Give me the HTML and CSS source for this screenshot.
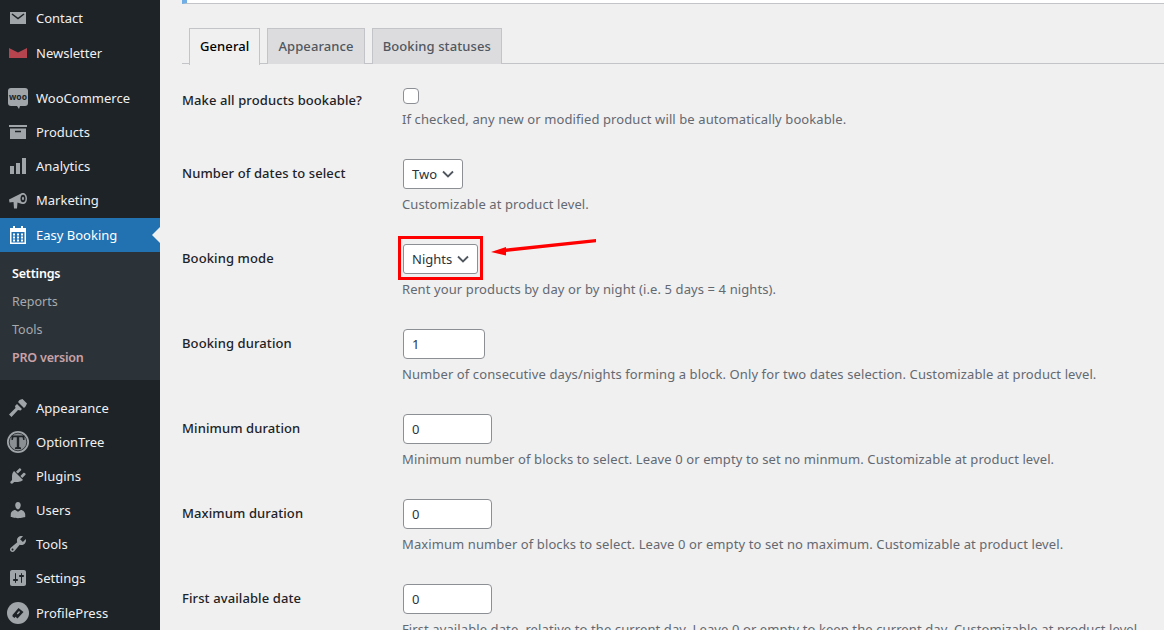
FILE: index.html
```html
<!DOCTYPE html>
<html>
<head>
<meta name="viewport" content="width=device-width, initial-scale=1">
<title>Easy Booking settings</title>
<link rel="stylesheet" href="styles.css">
</head>
<body>

<div class="page">
    <div id="sidebar">
        <ul class="menu">
            <li><svg class="ico" viewBox="0 0 20 20"><path d="M2 4h16v12H2z"/><path class="cut" d="M4 6l6 4.500L16 6"/></svg>Contact</li>
            <li class="news"><svg class="ico red" viewBox="0 0 20 20"><path d="M1 5l9 4.500L19 5v10H1z"/></svg>Newsletter</li>
            <li><svg class="ico wide" viewBox="0 0 22 22"><rect x="1" y="1" width="20" height="18" rx="3"/><path d="M10 19l2 3 1-3z"/><text class="woo" x="11" y="12.800" text-anchor="middle">woo</text></svg>WooCommerce</li>
            <li><svg class="ico" viewBox="0 0 20 20"><path d="M1 3h18v2H1zM2 6.500h16V17H2z"/><path class="cut" d="M7 9.500h6"/></svg>Products</li>
            <li><svg class="ico" viewBox="0 0 20 20"><path d="M18 18V2h-4v16h4zm-6 0V7H8v11h4zm-6 0v-8H2v8h4z"/></svg>Analytics</li>
            <li><svg class="ico" viewBox="0 0 20 20"><path d="M1 9.500L14 3l2 0c2 1 3 3 3 5.500s-1 5-3 5.500h-2l-4.500-1.500L9 18.500H6L5.500 12 1.500 12.500z"/><ellipse class="hole" cx="15" cy="8.500" rx="2.500" ry="3.800"/><ellipse cx="15" cy="8.500" rx="1" ry="1.800"/></svg>Marketing</li>
            <li class="current">
                <svg class="ico" viewBox="0 0 20 20"><path d="M5 1h2v2h6V1h2v2h3v16H2V3h3zM3.500 7v10.500h13V7z"/><path d="M5 8.500h2v2H5zM9 8.500h2v2H9zM13 8.500h2v2h-2zM5 11.500h2v2H5zM9 11.500h2v2H9zM13 11.500h2v2h-2zM5 14.500h2v2H5zM9 14.500h2v2H9zM13 14.500h2v2h-2z"/></svg>
                Easy Booking
            </li>
        </ul>
        <ul class="submenu">
            <li class="on">Settings</li>
            <li>Reports</li>
            <li>Tools</li>
            <li class="pro">PRO version</li>
        </ul>
        <ul class="menu lower">
            <li><svg class="ico" viewBox="0 0 20 20"><path d="M11.500 2l3-1 4.500 4.500-1.500 3-1.500 1.500-6-6zM9 6l5 5-1.500 1.500-2.500-.500-6.500 7-2.500-2.500 6.500-6.500L7 8z"/></svg>Appearance</li>
            <li><svg class="ico wide" viewBox="0 0 22 22"><circle cx="11" cy="11" r="11"/><circle class="ring" cx="11" cy="11" r="8.800"/><path class="hole" d="M4.500 4.500h13v4.500h-1.300l-.7-2.700h-3.300V16l1.800.6V18H8v-1.400l1.800-.6V6.300H6.500L5.800 9H4.500z"/></svg>OptionTree</li>
            <li><svg class="ico" viewBox="0 0 20 20"><path d="M13.110 4.360L9.870 7.600 8 5.730l3.240-3.240c.35-.34 1.050-.2 1.560.32.52.51.66 1.210.31 1.550zm-8 1.770l.91-1.120 9.010 9.010-1.190.84c-.71.71-2.630 1.160-3.820 1.160H6.140L4.900 17.260c-.59.59-1.540.59-2.120 0-.59-.58-.59-1.530 0-2.120l1.240-1.240v-3.880c0-1.130.4-3.190 1.090-3.890zm7.260 3.970l3.240-3.240c.34-.35 1.040-.21 1.550.31.52.51.66 1.210.31 1.550l-3.240 3.250z"/></svg>Plugins</li>
            <li><svg class="ico" viewBox="0 0 20 20"><path d="M10 9.250c-2.270 0-2.730-3.440-2.730-3.440C7 4.020 7.820 2 9.970 2c2.160 0 2.980 2.020 2.710 3.810 0 0-.41 3.440-2.680 3.440zm0 2.570L12.720 10c2.390 0 4.520 2.330 4.520 4.530v2.490s-3.650 1.130-7.240 1.130c-3.650 0-7.240-1.130-7.240-1.130v-2.490c0-2.250 1.940-4.480 4.470-4.480z"/></svg>Users</li>
            <li><svg class="ico" viewBox="0 0 20 20"><path d="M16.680 9.770c-1.340 1.340-3.300 1.670-4.950.99l-5.410 6.520c-.99.99-2.590.99-3.580 0s-.99-2.590 0-3.570l6.520-5.420c-.68-1.650-.35-3.610.99-4.950 1.280-1.280 3.120-1.620 4.720-1.060l-2.890 2.890 2.820 2.820 2.860-2.870c.53 1.580.18 3.390-1.080 4.650zM3.810 16.210c.4.39 1.040.39 1.430 0 .4-.4.4-1.040 0-1.430-.39-.4-1.030-.4-1.430 0-.39.39-.39 1.030 0 1.430z"/></svg>Tools</li>
            <li><svg class="ico" viewBox="0 0 20 20"><path d="M18 16V4c0-1.100-.9-2-2-2H4c-1.100 0-2 .9-2 2v12c0 1.100.9 2 2 2h12c1.100 0 2-.9 2-2zM8 11h1c.55 0 1 .45 1 1s-.45 1-1 1H8v1.500c0 .28-.22.5-.5.5s-.5-.22-.5-.5V13H6c-.55 0-1-.45-1-1s.45-1 1-1h1V5.500c0-.28.22-.5.5-.5s.5.22.5.5V11zm5-2h-1c-.55 0-1-.45-1-1s.45-1 1-1h1V5.500c0-.28.22-.5.5-.5s.5.22.5.5V7h1c.55 0 1 .45 1 1s-.45 1-1 1h-1v5.500c0 .28-.22.5-.5.5s-.5-.22-.5-.5V9z"/></svg>Settings</li>
            <li class="last"><svg class="ico wide" viewBox="0 0 22 22"><circle cx="11" cy="11" r="11"/><path class="hole" fill-rule="evenodd" d="M5.500 13l6-7 5 4-6 6.500-2-1.700-1 1.200-2-1.500zM12 9l-2.200 2.500 1 .9 2.300-2.500z"/></svg>ProfilePress</li>
        </ul>
    </div>

    <div id="content">
        <div class="notice"></div>

        <div class="tabs">
            <a class="tab active">General</a>
            <a class="tab">Appearance</a>
            <a class="tab">Booking statuses</a>
        </div>

        <div class="row first">
            <label>Make all products bookable?</label>
            <div>
                <input type="checkbox" class="check">
                <p class="desc">If checked, any new or modified product will be automatically bookable.</p>
            </div>
        </div>

        <div class="row">
            <label>Number of dates to select</label>
            <div>
                <div class="select s-two">Two<svg class="chev" viewBox="0 0 12 8"><path d="M1 1.500l5 5 5-5"/></svg></div>
                <p class="desc">Customizable at product level.</p>
            </div>
        </div>

        <div class="row">
            <label>Booking mode</label>
            <div class="marked">
                <div class="select s-nights">Nights<svg class="chev" viewBox="0 0 12 8"><path d="M1 1.500l5 5 5-5"/></svg></div>
                <p class="desc">Rent your products by day or by night (i.e. 5 days = 4 nights).</p>
                <div class="redbox"></div>
                <svg class="arrow" viewBox="0 0 106 17"><path d="M105 0L15 9.500 15 8 0 13l15 3.500V13l90-9.800z"/></svg>
            </div>
        </div>

        <div class="row">
            <label>Booking duration</label>
            <div>
                <input type="text" class="num short" value="1">
                <p class="desc">Number of consecutive days/nights forming a block. Only for two dates selection. Customizable at product level.</p>
            </div>
        </div>

        <div class="row">
            <label>Minimum duration</label>
            <div>
                <input type="text" class="num" value="0">
                <p class="desc">Minimum number of blocks to select. Leave 0 or empty to set no minmum. Customizable at product level.</p>
            </div>
        </div>

        <div class="row">
            <label>Maximum duration</label>
            <div>
                <input type="text" class="num" value="0">
                <p class="desc">Maximum number of blocks to select. Leave 0 or empty to set no maximum. Customizable at product level.</p>
            </div>
        </div>

        <div class="row">
            <label>First available date</label>
            <div>
                <input type="text" class="num" value="0">
                <p class="desc">First available date, relative to the current day. Leave 0 or empty to keep the current day. Customizable at product level.</p>
            </div>
        </div>
    </div>
</div>

</body>
</html>
```

FILE: styles.css
```css
html, body {
  margin: 0;
  height: 630px;
  overflow: hidden;
}

body {
  background: #f0f0f1;
  color: #2c3338;
  font-family: "Noto Sans", "Open Sans", sans-serif;
  font-size: 13px;
}

.page {
  display: flex;
  height: 630px;
  overflow: hidden;
}

/* Admin menu */
#sidebar {
  width: 160px;
  flex: none;
  background: #1d2327;
  color: #f0f0f1;
  padding-top: 1px;
}

ul {
  list-style: none;
  margin: 0;
  padding: 0;
}

.menu li {
  display: flex;
  align-items: center;
  height: 34px;
  padding-left: 8px;
}

.menu .news {
  margin-top: 1px;
  margin-bottom: 11px;
}

.menu .last {
  margin-top: 1px;
}

.menu .current {
  position: relative;
  background: #2271b1;
  color: #fff;
  margin-top: 1px;
}

.menu .current:after {
  content: "";
  position: absolute;
  right: 0;
  top: 9px;
  border: 8px solid transparent;
  border-right-color: #f0f0f1;
  border-left-width: 0;
}

.ico {
  width: 20px;
  height: 20px;
  flex: none;
  margin-right: 8px;
  fill: #a0a5aa;
}

.ico.wide {
  width: 22px;
  height: 22px;
  margin-left: -1px;
  margin-right: 7px;
}

.current .ico {
  fill: #fff;
}

.ico.red {
  fill: #b5444f;
}

.cut {
  fill: none;
  stroke: #1d2327;
  stroke-width: 1.5;
}

.ring {
  fill: #8a8f94;
  stroke: #1d2327;
  stroke-width: 0.8;
}

.hole {
  fill: #1d2327;
}

.woo {
  font-size: 8.500px;
  font-weight: 700;
  fill: #1d2327;
}

.submenu {
  background: #2c3338;
  color: #a7aaad;
  padding: 8px 0;
  height: 128px;
  box-sizing: border-box;
}

.submenu li {
  height: 28px;
  line-height: 28px;
  padding-left: 12px;
  font-size: 12.500px;
}

.submenu .on {
  color: #fff;
  font-weight: 600;
  letter-spacing: -0.2px;
}

.submenu .pro {
  color: #c9a2a8;
  font-weight: 600;
  letter-spacing: -0.2px;
}

.lower {
  padding-top: 11px;
}

/* Settings area */
#content {
  flex: 1;
  min-width: 0;
  padding-left: 22px;
}

.notice {
  height: 3px;
  background: #fff;
  border-left: 5px solid #72aee6;
  border-bottom: 1px solid #c3c4c7;
}

.tabs {
  display: flex;
  gap: 7px;
  height: 60px;
  padding: 24px 0 0 7px;
  box-sizing: border-box;
  border-bottom: 1px solid #c3c4c7;
  margin-bottom: 10px;
}

.tab {
  height: 35px;
  line-height: 35px;
  padding: 0 10px;
  background: #dcdcde;
  border: 1px solid #c3c4c7;
  border-bottom: 0;
  color: #50575e;
  font-weight: 500;
  letter-spacing: 0.1px;
}

.tab.active {
  background: #f0f0f1;
  color: #000;
  height: 36px;
}

.row {
  display: grid;
  grid-template-columns: 220px 1fr;
  height: 85px;
}

.row label {
  padding-top: 4px;
  line-height: 20px;
  font-weight: 500;
  letter-spacing: 0.1px;
  color: #1d2327;
}

.row.first label {
  padding-top: 16px;
}

.check {
  display: block;
  appearance: none;
  width: 16px;
  height: 16px;
  margin: 14px 0 0 1px;
  box-sizing: border-box;
  background: #fff;
  border: 1px solid #8c8f94;
  border-radius: 4px;
}

.desc {
  margin: 5px 0 0;
  line-height: 20px;
  color: #646970;
  white-space: nowrap;
  letter-spacing: 0.1px;
}

.select {
  display: flex;
  align-items: center;
  justify-content: space-between;
  height: 30px;
  box-sizing: border-box;
  margin-left: 1px;
  padding: 0 8px;
  background: #fff;
  border: 1px solid #8c8f94;
  border-radius: 3px;
}

.s-two {
  width: 60px;
}

.s-nights {
  width: 75px;
}

.chev {
  width: 12px;
  height: 8px;
  fill: none;
  stroke: #50575e;
  stroke-width: 1.800;
}

.num {
  display: block;
  width: 89px;
  height: 30px;
  box-sizing: border-box;
  margin-left: 1px;
  padding: 0 8px;
  background: #fff;
  border: 1px solid #8c8f94;
  border-radius: 4px;
  font: inherit;
  color: #2c3338;
}

.num.short {
  width: 82px;
}

/* Red annotation over the booking mode select */
.marked {
  position: relative;
}

.redbox {
  position: absolute;
  left: -4px;
  top: -8px;
  width: 85px;
  height: 44px;
  box-sizing: border-box;
  border: 3px solid #f00;
}

.arrow {
  position: absolute;
  left: 89px;
  top: -5px;
  width: 106px;
  height: 17px;
  fill: #f00;
}
```
